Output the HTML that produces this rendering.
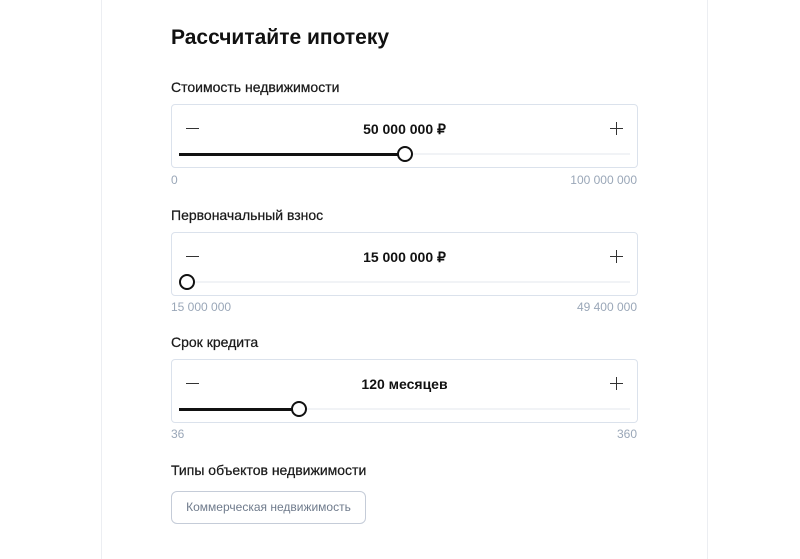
<!DOCTYPE html>
<html><head><meta charset="utf-8"><style>
body{margin:0;width:800px;height:550px;background:#fff;font-family:"Liberation Sans",sans-serif;position:relative;overflow:hidden;color:#1a1a1a}
.panel{position:absolute;left:101px;top:-1px;width:605px;height:560px;border-left:1px solid #eceef2;border-right:1px solid #eceef2}
h1{position:absolute;left:171px;top:26px;margin:0;font-size:21px;font-weight:bold;color:#111}
.lbl{position:absolute;left:171px;font-size:14px;color:#1a1a1a;-webkit-text-stroke:0.25px #1a1a1a}
.box{position:absolute;left:171px;width:465px;height:62px;border:1px solid #dbe2ec;border-radius:4px}
.minus{position:absolute;left:14px;top:23px;width:13px;height:1.3px;background:#333}
.plus{position:absolute;right:14px;top:17px;width:13px;height:13px}
.plus:before{content:"";position:absolute;left:0;top:6px;width:13px;height:1.3px;background:#333}
.plus:after{content:"";position:absolute;left:6px;top:0;width:1.3px;height:13px;background:#333}
.val{position:absolute;left:0;right:0;top:16px;text-align:center;font-size:14px;font-weight:bold;color:#111}
.track{position:absolute;left:7px;right:7px;top:48px;height:2px;background:#f1f3f6}
.fill{position:absolute;left:0;top:-0.5px;height:3px;background:#111}
.thumb{position:absolute;top:-7px;width:12px;height:12px;border:2.5px solid #111;border-radius:50%;background:#fff;margin-left:-8px}
.mm{position:absolute;font-size:12px;color:#9aa7b8}
.chip{position:absolute;left:171px;top:491px;width:193px;height:31px;border:1px solid #c5ccd8;border-radius:6px;font-size:12px;color:#6f7b8c;line-height:31px;text-align:center}
</style></head><body>
<div class="panel"></div>
<h1>Рассчитайте ипотеку</h1>

<div class="lbl" style="top:79px">Стоимость недвижимости</div>
<div class="box" style="top:104px"><div class="minus"></div><div class="val">50 000 000 ₽</div><div class="plus"></div>
<div class="track"><div class="fill" style="width:226px"></div><div class="thumb" style="left:226px"></div></div></div>
<div class="mm" style="left:171px;top:173px">0</div>
<div class="mm" style="right:163px;top:173px">100 000 000</div>

<div class="lbl" style="top:207px">Первоначальный взнос</div>
<div class="box" style="top:232px"><div class="minus"></div><div class="val">15 000 000 ₽</div><div class="plus"></div>
<div class="track"><div class="thumb" style="left:8px"></div></div></div>
<div class="mm" style="left:171px;top:300px">15 000 000</div>
<div class="mm" style="right:163px;top:300px">49 400 000</div>

<div class="lbl" style="top:334px">Срок кредита</div>
<div class="box" style="top:359px"><div class="minus"></div><div class="val">120 месяцев</div><div class="plus"></div>
<div class="track"><div class="fill" style="width:120px"></div><div class="thumb" style="left:120px"></div></div></div>
<div class="mm" style="left:171px;top:427px">36</div>
<div class="mm" style="right:163px;top:427px">360</div>

<div class="lbl" style="top:462px">Типы объектов недвижимости</div>
<div class="chip">Коммерческая недвижимость</div>
</body></html>
